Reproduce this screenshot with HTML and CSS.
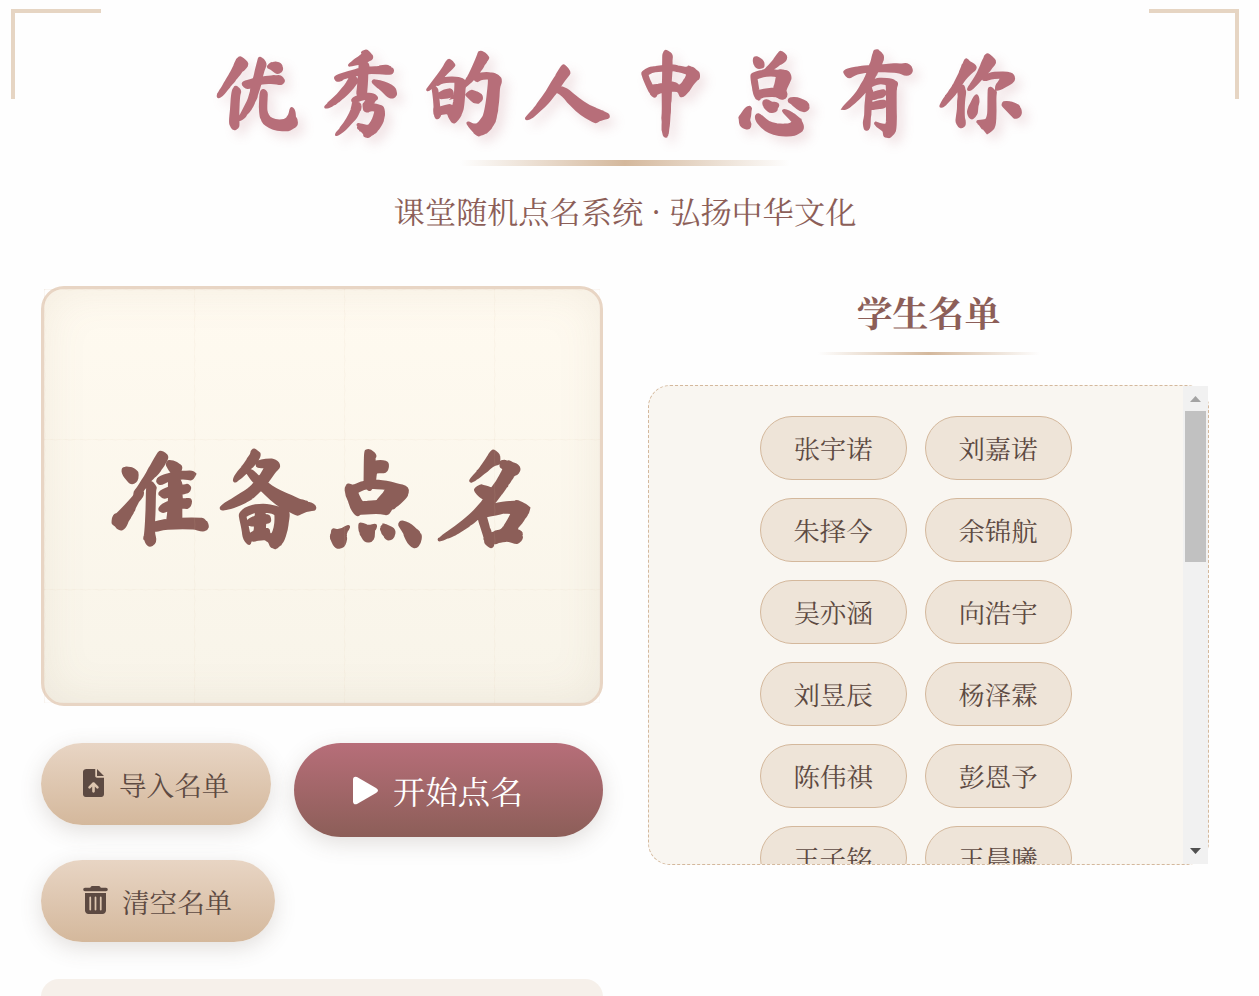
FILE: index.html
```html
<!DOCTYPE html>
<html lang="zh-CN">
<head>
    <meta charset="UTF-8">
    <meta name="viewport" content="width=device-width, initial-scale=1.0">
    <title>课堂随机点名系统</title>
    <link rel="stylesheet" href="styles.css">
</head>
<body>

    <div class="corner corner-left"></div>
    <div class="corner corner-right"></div>

    <div class="container">

        <header>
            <h1>优秀的人中总有你</h1>
            <div class="title-line"></div>
            <p class="subtitle">课堂随机点名系统 · 弘扬中华文化</p>
        </header>

        <main>
            <section class="left">
                <div class="display">
                    <span class="current-name">准备点名</span>
                    <!-- paper grid over the name -->
                    <svg class="paper" width="556" height="414">
                        <defs>
                            <pattern id="grid" width="150" height="150" patternUnits="userSpaceOnUse">
                                <path d="M0 .5q4-1 8 0t7 0t7 0t8 0t8 0t7 0t7 0t8 0t8 0t7 0t7 0t8 0t8 0t7 0t7 0t8 0t8 0t7 0t7 0t8 0M.5 0q-1 4 0 8t0 7t0 7t0 8t0 8t0 7t0 7t0 8t0 8t0 7t0 7t0 8t0 8t0 7t0 7t0 8t0 8t0 7t0 7t0 8"/>
                            </pattern>
                        </defs>
                        <rect width="556" height="414" fill="url(#grid)"/>
                    </svg>
                </div>

                <div class="controls">
                    <button class="btn import">
                        <svg width="21" height="28" viewBox="0 0 384 512"><path d="M64 0C29 0 0 22 0 50v412c0 28 22 50 50 50h284c28 0 50-22 50-50V160H256c-18 0-32-14-32-32V0H64zm192 0v128h128L256 0zm-40 408c0 13-11 24-24 24s-24-11-24-24v-86l-31 31c-9 9-25 9-34 0s-9-25 0-34l72-72c9-9 25-9 34 0l72 72c9 9 9 25 0 34s-25 9-34 0l-31-31v86z"/></svg>
                        <span>导入名单</span>
                    </button>
                    <button class="btn start">
                        <svg width="25" height="29" viewBox="0 0 25 30" preserveAspectRatio="none"><path d="M0 4Q0 0 4 1L23 12.500Q27 15 23 17.500L4 29Q0 30 0 26Z"/></svg>
                        <span>开始点名</span>
                    </button>
                    <button class="btn clear">
                        <svg width="25" height="28" viewBox="0 0 448 512"><path d="M135 18C141 7 152 0 164 0h120c12 0 23 7 29 18l7 14h96c18 0 32 14 32 32s-14 32-32 32H32C14 96 0 82 0 64s14-32 32-32h96l7-14zM32 128h384v320c0 35-29 64-64 64H96c-35 0-64-29-64-64V128zm96 64c-9 0-16 7-16 16v224c0 9 7 16 16 16s16-7 16-16V208c0-9-7-16-16-16zm96 0c-9 0-16 7-16 16v224c0 9 7 16 16 16s16-7 16-16V208c0-9-7-16-16-16zm96 0c-9 0-16 7-16 16v224c0 9 7 16 16 16s16-7 16-16V208c0-9-7-16-16-16z"/></svg>
                        <span>清空名单</span>
                    </button>
                </div>

                <div class="history"></div>
            </section>

            <section class="right">
                <h2>学生名单</h2>
                <div class="list-line"></div>
                <div class="list-box">
                    <div class="students">
                        <span>张宇诺</span>
                        <span>刘嘉诺</span>
                        <span>朱择今</span>
                        <span>余锦航</span>
                        <span>吴亦涵</span>
                        <span>向浩宇</span>
                        <span>刘昱辰</span>
                        <span>杨泽霖</span>
                        <span>陈伟祺</span>
                        <span>彭恩予</span>
                        <span>王子铭</span>
                        <span>王晨曦</span>
                    </div>
                    <div class="scrollbar">
                        <svg width="25" height="25"><path fill="#a3a3a3" d="M7 16l5.500-6 5.500 6z"/></svg>
                        <div class="thumb"></div>
                        <svg class="down" width="25" height="25"><path fill="#505050" d="M7 9h11l-5.500 6z"/></svg>
                    </div>
                </div>
            </section>
        </main>

    </div>

</body>
</html>
```
FILE: styles.css
```css
* {
    box-sizing: border-box;
    margin: 0;
    padding: 0;
}

body {
    height: 996px;
    overflow: hidden;
    background-color: #fefefe;
    color: #5d4a42;
    font-family: "Noto Serif SC", "Noto Serif CJK SC", "Noto Sans CJK SC", serif;
    font-weight: 400;
}

.corner {
    position: absolute;
    top: 9px;
    width: 90px;
    height: 90px;
    border: 4px solid #e6d5c3;
    border-bottom: none;
}

.corner-left {
    left: 11px;
    border-right: none;
}

.corner-right {
    left: 1149px;
    border-left: none;
}

.container {
    width: 1168px;
    margin-left: 41px;
}

header {
    display: flex;
    flex-direction: column;
    align-items: center;
    height: 286px;
    padding-top: 34px;
}

h1 {
    height: 126px;
    line-height: 115px;
    font-family: "Ma Shan Zheng", "Noto Sans CJK SC", cursive;
    font-size: 91.300px;
    font-weight: 700;
    letter-spacing: 12px;
    white-space: nowrap;
    color: #b76e79;
    text-shadow: 6px 6px 12px rgba(183, 110, 121, 0.2);
}

.title-line {
    width: 330px;
    height: 6px;
    background: linear-gradient(90deg, transparent, #d4b89c, transparent);
}

.subtitle {
    margin-top: 22px;
    line-height: 46px;
    font-size: 31.200px;
    white-space: nowrap;
    color: #8c5e58;
}

main {
    display: flex;
    gap: 45px;
}

.left {
    width: 562px;
}

.display {
    position: relative;
    display: flex;
    align-items: center;
    justify-content: center;
    height: 420px;
    border: 3px solid #e8d5c4;
    border-radius: 23px;
    background: linear-gradient(#fffaf0, #f8f4e9);
    box-shadow: inset 0 0 45px rgba(139, 115, 85, 0.1);
}

.paper {
    position: absolute;
    top: 0;
    left: 0;
    fill: none;
    stroke: rgba(212, 184, 156, 0.1);
}

.current-name {
    line-height: 140px;
    font-family: "Ma Shan Zheng", "Noto Sans CJK SC", cursive;
    font-size: 108px;
    font-weight: 700;
    color: #8c5e58;
}

.controls {
    display: flex;
    flex-wrap: wrap;
    align-items: flex-start;
    gap: 23px;
    margin-top: 37px;
}

.btn {
    display: flex;
    align-items: center;
    height: 82px;
    padding-left: 42px;
    border: none;
    border-radius: 41px;
    background: linear-gradient(#e8d5c4, #d4b89c);
    box-shadow: 0 6px 22px rgba(93, 80, 66, 0.18);
    color: #5d4a42;
    font-family: inherit;
    font-size: 27.500px;
    font-weight: 400;
    line-height: 40px;
    white-space: nowrap;
}

.btn svg {
    flex: none;
    margin-bottom: 2px;
    fill: currentColor;
}

.import {
    width: 230px;
    gap: 15px;
}

.start {
    width: 309px;
    height: 94px;
    padding-left: 59px;
    gap: 15px;
    border-radius: 47px;
    background: linear-gradient(#b76e79, #8c5e58);
    color: #fff;
    font-size: 32.400px;
}

.start svg {
    margin-bottom: 0;
}

.clear {
    width: 234px;
    gap: 14px;
}

.history {
    height: 60px;
    margin-top: 37px;
    border-radius: 18px;
    background-color: #f6f0ea;
}

.right {
    display: flex;
    flex-direction: column;
    align-items: center;
    width: 561px;
}

h2 {
    height: 66px;
    line-height: 51px;
    font-size: 36px;
    font-weight: 700;
    color: #8c5e58;
}

.list-line {
    width: 222px;
    height: 3px;
    margin-bottom: 30px;
    background: linear-gradient(90deg, transparent, #d4b89c, transparent);
}

.list-box {
    display: flex;
    width: 561px;
    height: 480px;
    border: 1px dashed #d4b89c;
    border-radius: 22px;
    background-color: #f9f6f1;
}

.students {
    display: grid;
    grid-template-columns: 147px 147px;
    grid-auto-rows: 64px;
    flex: 1;
    justify-content: center;
    gap: 18px;
    padding-top: 30px;
    overflow: hidden;
}

.students span {
    padding-right: 1px;
    border: 1px solid #d4b89c;
    border-radius: 32px;
    background-color: #eee4d8;
    font-size: 26.400px;
    line-height: 62px;
    text-align: center;
}

.scrollbar {
    display: flex;
    flex-direction: column;
    width: 25px;
    background-color: #f1f1f1;
}

.thumb {
    height: 151px;
    margin: 0 2px;
    background-color: #c1c1c1;
}

.down {
    margin-top: auto;
}
```
